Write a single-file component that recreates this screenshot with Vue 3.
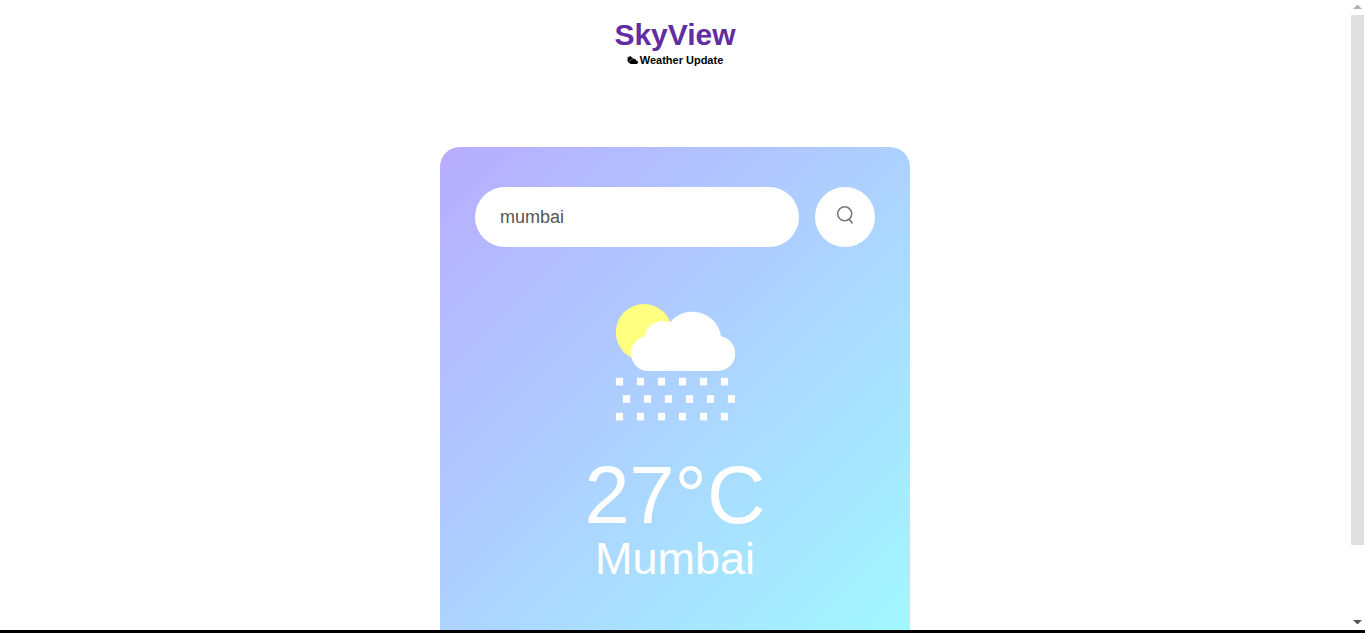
<script setup>
import { ref } from 'vue'

const city = ref('mumbai')
const temperature = ref(27)
const place = ref('Mumbai')

const drops = [
  { y: 73.8, xs: [0, 21, 42, 63, 84, 105] },
  { y: 91.2, xs: [7, 28, 49, 70, 91, 112] },
  { y: 108.8, xs: [0, 21, 42, 63, 84, 105] }
]

function search() {
  const name = city.value.trim()
  if (name) place.value = name[0].toUpperCase() + name.slice(1)
}
</script>

<template>
  <div class="window">
    <div class="viewport">
      <main class="page">
        <header class="brand">
          <h1>SkyView</h1>
          <h2>
            <svg class="mark" viewBox="0 0 11 9" aria-hidden="true">
              <path d="M1 2.3 0 1.300l1.600.1L1.900 0l1 .8L4 0l.3 1.200 1.200-.2-.4 1C6 2 6.700 2.400 7.100 3.100 8.300 3 9 3.600 9.200 4.400 10.400 4.500 11 5.200 11 6.200 11 7.400 10.200 8 9 8H4.200C3 8 2.300 7.500 2.100 6.600L.9 6.500l.4-1L0 4.700l1-.6L.2 3z" />
              <path d="M2.300 5.300C2.700 4.500 3.400 4.400 4 4.500M4.200 3.600C4.600 2.900 5.300 2.700 6 3" fill="none" stroke="#fff" stroke-width=".5" />
            </svg>
            <span>Weather Update</span>
          </h2>
        </header>

        <section class="card">
          <form class="search" @submit.prevent="search">
            <input v-model="city" type="text" aria-label="City" spellcheck="false" autocomplete="off" />
            <button type="submit" aria-label="Search">
              <svg viewBox="0 0 20 20" aria-hidden="true">
                <circle cx="9.700" cy="8.800" r="7" />
                <path d="M12.800 14.500h1.700l3 4" />
              </svg>
            </button>
          </form>

          <div class="weather">
            <svg class="condition" viewBox="0 0 120 120" role="img" aria-label="Rain with sun">
              <circle cx="29" cy="28.300" r="28.200" fill="#ffff80" />
              <path
                fill="#fff"
                d="M32 67A17.500 17.500 0 0 1 29.500 32.500 18.500 18.500 0 0 1 55 18.500 28.800 28.800 0 0 1 106 32.300 17.500 17.500 0 0 1 103 67z"
              />
              <g fill="#fff">
                <template v-for="row in drops" :key="row.y">
                  <rect v-for="x in row.xs" :key="x" :x="x + 0.9" :y="row.y" width="7.200" height="7.600" />
                </template>
              </g>
            </svg>
            <p class="temp">{{ temperature }}°C</p>
            <p class="city">{{ place }}</p>
          </div>
        </section>
      </main>

      <div class="scrollbar" aria-hidden="true">
        <svg viewBox="0 0 15 15"><path d="M3 9h9L8 5H7z" fill="#b0b0b0" /></svg>
        <div class="track"><div class="thumb"></div></div>
        <svg viewBox="0 0 15 15"><path d="M3 5h9L8 9H7z" fill="#555" /></svg>
      </div>
    </div>
  </div>
</template>

<style>
body {
  margin: 0;
  background: #fff;
}
</style>

<style scoped>
.window {
  box-sizing: border-box;
  height: 100vh;
  border-bottom: 3px solid #000;
  font-family: "Liberation Sans", Arial, sans-serif;
}

.viewport {
  display: flex;
  height: 100%;
  overflow: hidden;
}

.page {
  flex: 1;
  min-width: 0;
}

.brand {
  padding-top: 16px;
  text-align: center;
}

h1,
h2,
p {
  margin: 0;
}

h1 {
  color: #612da1;
  font-size: 30px;
  line-height: 38px;
}

h2 {
  display: flex;
  justify-content: center;
  align-items: center;
  gap: 2px;
  color: #000;
  font-size: 11px;
  line-height: 13px;
}

.mark {
  width: 11px;
  height: 9px;
}

.card {
  box-sizing: border-box;
  width: 90%;
  max-width: 470px;
  min-height: 540px;
  margin: 80px auto 0;
  padding: 40px 35px;
  border-radius: 20px;
  background: linear-gradient(135deg, #b8acff, #a0fcff);
  color: #fff;
  text-align: center;
}

.search {
  display: flex;
  gap: 16px;
}

.search input {
  box-sizing: border-box;
  flex: 1;
  min-width: 0;
  height: 60px;
  padding: 10px 25px;
  border: 0;
  border-radius: 30px;
  outline: 0;
  background: #fff;
  color: #555;
  font: 18px "Liberation Sans", Arial, sans-serif;
}

.search button {
  width: 60px;
  height: 60px;
  padding: 0 0 4px;
  border: 0;
  border-radius: 50%;
  background: #fff;
  cursor: pointer;
}

.search svg {
  display: block;
  width: 20px;
  height: 20px;
  margin: 0 auto;
  fill: none;
  stroke: #757575;
  stroke-width: 1.5;
}

.condition {
  display: block;
  width: 120px;
  height: 120px;
  margin: 57px auto 0;
}

.temp {
  margin-top: 30px;
  font-size: 81px;
  line-height: 82px;
}

.city {
  font-size: 45px;
  line-height: 46px;
}

.scrollbar {
  display: flex;
  flex-direction: column;
  width: 15px;
}

.scrollbar svg {
  width: 15px;
  height: 15px;
}

.track {
  flex: 1;
  padding: 0 1px;
}

.thumb {
  height: 530px;
  max-height: 100%;
  background: #e0e0e0;
}
</style>
